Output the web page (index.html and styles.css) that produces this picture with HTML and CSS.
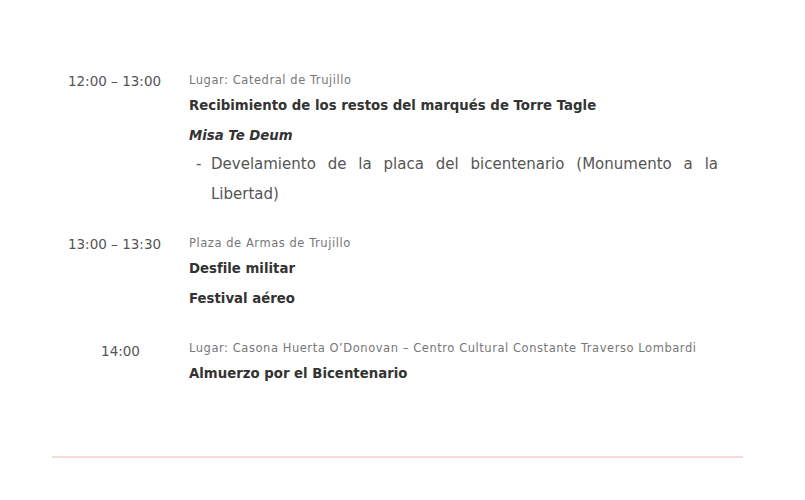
FILE: index.html
```html
<!DOCTYPE html>
<html lang="es">
<head>
<meta charset="utf-8">
<link rel="stylesheet" href="styles.css">
</head>
<body>
<main class="page">
  <section class="event">
    <div class="time">12:00 – 13:00</div>
    <div class="details">
      <div class="place">Lugar: Catedral de Trujillo</div>
      <div class="title">Recibimiento de los restos del marqués de Torre Tagle</div>
      <div class="title italic">Misa <em>Te Deum</em></div>
      <ul class="list">
        <li>Develamiento de la placa del bicentenario (Monumento a la Libertad)</li>
      </ul>
    </div>
  </section>
  <section class="event">
    <div class="time">13:00 – 13:30</div>
    <div class="details">
      <div class="place">Plaza de Armas de Trujillo</div>
      <div class="title">Desfile militar</div>
      <div class="title">Festival aéreo</div>
    </div>
  </section>
  <section class="event">
    <div class="time time-single">14:00</div>
    <div class="details">
      <div class="place">Lugar: Casona Huerta O’Donovan – Centro Cultural Constante Traverso Lombardi</div>
      <div class="title">Almuerzo por el Bicentenario</div>
    </div>
  </section>
  <hr class="rule">
</main>
</body>
</html>
```
FILE: styles.css
```css
html, body {
  margin: 0;
  padding: 0;
  background: #ffffff;
}
body {
  font-family: "DejaVu Sans", sans-serif;
  color: #555;
}
.page {
  width: 691px;
  margin-left: 52px;
  padding-top: 70px;
  display: flex;
  flex-direction: column;
  gap: 24px;
}
.event {
  display: grid;
  grid-template-columns: 137px 1fr;
  padding-right: 25px;
}
.time {
  font-size: 13.5px;
  line-height: 20px;
  padding-top: 1px;
  padding-right: 12px;
  text-align: center;
  color: #555;
  white-space: nowrap;
}
.time-single {
  padding-top: 3px;
  padding-right: 0;
}
.place {
  font-size: 11.5px;
  line-height: 20px;
  margin-bottom: 1px;
  color: #777;
  letter-spacing: 0.55px;
  white-space: nowrap;
}
.title {
  font-size: 13.3px;
  line-height: 30px;
  font-weight: bold;
  color: #333;
}
.italic {
  font-style: italic;
}
.title em {
  font-style: italic;
}
.list {
  list-style: none;
  margin: -2px 0 0 0;
  padding: 0 0 0 22px;
}
.list li {
  position: relative;
  font-size: 15px;
  line-height: 30px;
  text-align: justify;
  color: #555;
}
.list li::before {
  content: "-";
  position: absolute;
  left: -15px;
}
.rule {
  margin: 43px 0 0 0;
  border: 0;
  height: 2px;
  background: #f8d8d8;
}
```
